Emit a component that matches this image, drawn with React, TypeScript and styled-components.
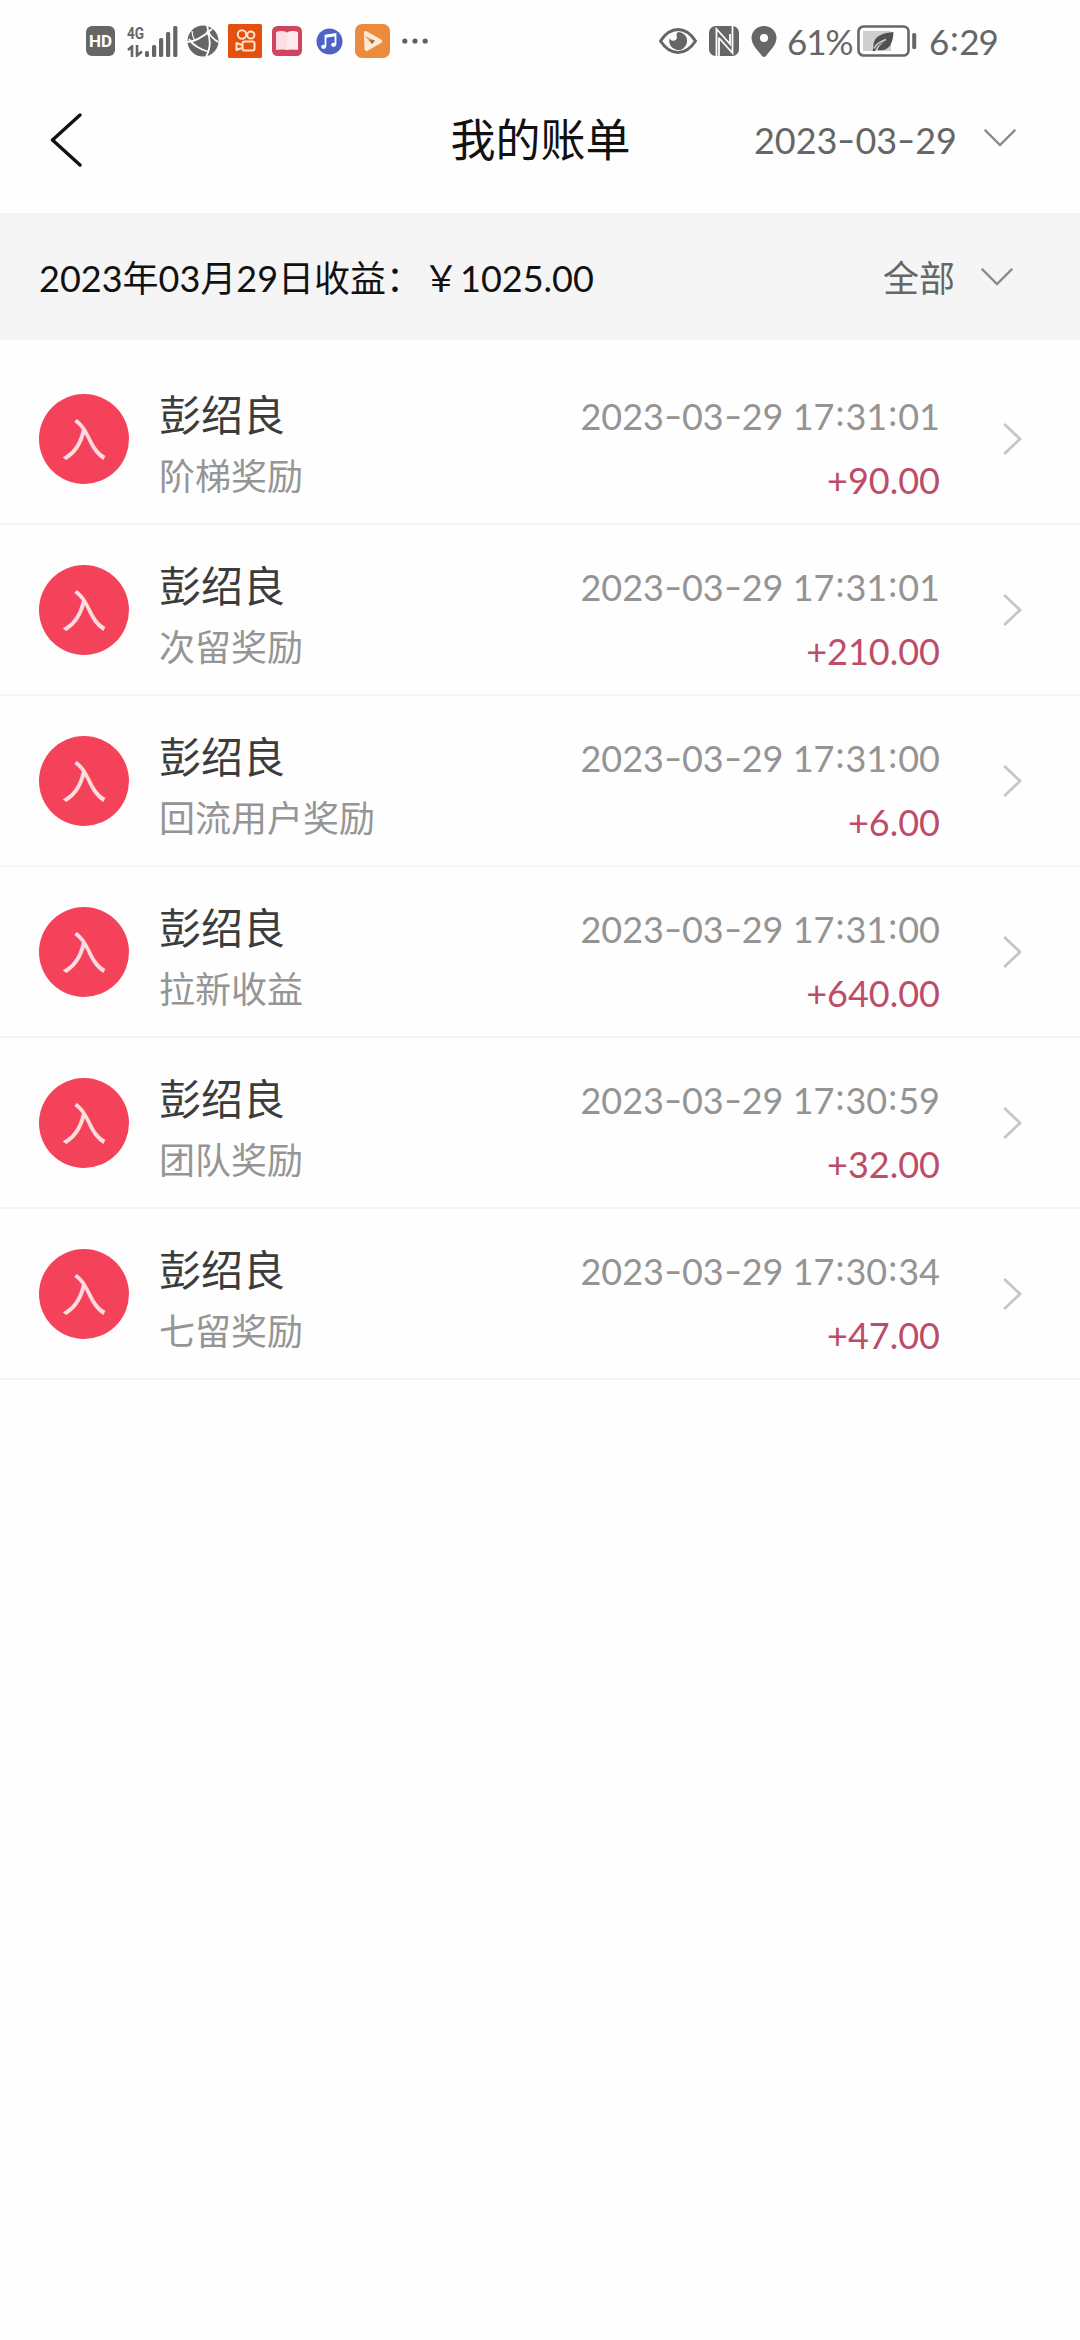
import React from 'react';
import styled, { createGlobalStyle } from 'styled-components';

const GlobalStyle = createGlobalStyle`
  * { box-sizing: border-box; }
  html, body { margin: 0; padding: 0; background: #fefefe; }
  body { font-family: Lato, "Noto Sans CJK SC", sans-serif; font-weight: 400; }
  svg { display: block; flex: none; }
`;

const Screen = styled.div`
  width: 1080px;
  min-height: 2340px;
  background: #fefefe;
  display: flex;
  flex-direction: column;
`;

const StatusBar = styled.header`
  height: 82px;
  display: flex;
  align-items: center;
  justify-content: space-between;
  padding: 0 86px 0 86px;
  color: #666;
`;

const StatusGroup = styled.div`
  display: flex;
  align-items: center;
`;

const Gap = styled.div<{ $left: number }>`
  margin-left: ${(p) => p.$left}px;
  display: flex;
  align-items: center;
`;

const HdBadge = styled.div`
  width: 29px;
  height: 30px;
  border-radius: 6px;
  background: #666;
  color: #fff;
  font: 700 17px/31px Roboto, sans-serif;
  text-align: center;
`;

const NetLabel = styled.div`
  width: 18px;
  height: 31px;
  display: flex;
  flex-direction: column;
  justify-content: space-between;
  font: 700 17px/15px "Roboto", sans-serif;
  span { display: block; transform: scaleX(0.8); transform-origin: left; }
`;

const StatusText = styled.span<{ $width: number }>`
  width: ${(p) => p.$width}px;
  font-size: 35px;
  line-height: 38px;
  letter-spacing: -1px;
  margin-top: -1px;
  white-space: nowrap;
`;

const NavBar = styled.nav`
  height: 131px;
  display: grid;
  grid-template-columns: 1fr auto 1fr;
  align-items: center;
  padding: 0 64px 16px 50px;
`;

const BackButton = styled.button`
  border: 0;
  padding: 0;
  background: none;
  justify-self: start;
`;

const Title = styled.h1`
  margin: 0 0 0 15px;
  font-size: 45px;
  line-height: 60px;
  font-weight: 400;
  color: #111;
`;

const Picker = styled.div<{ $gap: number }>`
  display: flex;
  align-items: center;
  justify-self: end;
  gap: ${(p) => p.$gap}px;
  font-size: 36px;
  line-height: 48px;
  color: #666;
  white-space: nowrap;
  svg { margin-top: -3px; }
`;

const Summary = styled.section`
  height: 127px;
  background: #f5f5f6;
  display: flex;
  align-items: center;
  justify-content: space-between;
  padding: 3px 67px 0 39px;
  font-size: 36px;
  line-height: 48px;
  color: #111;
`;

const Currency = styled.span`
  margin: 0 1px 0 1px;
`;

const List = styled.ul`
  list-style: none;
  margin: 0;
  padding: 14px 0 0;
`;

const Row = styled.li`
  height: 171px;
  border-bottom: 2px solid #f5f5f6;
  display: flex;
  align-items: center;
  padding: 0 58px 0 39px;
`;

const Avatar = styled.div`
  width: 90px;
  height: 90px;
  border-radius: 50%;
  background: #f4425b;
  color: #ffdcdf;
  font-family: "Noto Sans CJK SC", sans-serif;
  font-weight: 400;
  font-size: 46px;
  line-height: 84px;
  text-align: center;
`;

const Column = styled.div<{ $end?: boolean }>`
  display: flex;
  flex-direction: column;
  align-items: ${(p) => (p.$end ? 'flex-end' : 'flex-start')};
  ${(p) => (p.$end ? 'margin: 0 63px 0 auto; padding-top: 18px;' : 'margin-left: 30px; padding-top: 12px;')}
`;

const Name = styled.span`
  font-size: 42px;
  line-height: 62px;
  color: #3c3c3c;
`;

const Kind = styled.span`
  font-size: 36px;
  line-height: 60px;
  color: #959595;
`;

const Time = styled.time`
  font-size: 36px;
  line-height: 64px;
  color: #949494;
  white-space: nowrap;
`;

const Amount = styled.span`
  font-size: 36px;
  line-height: 64px;
  color: #bd4c67;
`;

const Dash = styled.span`
  display: inline-block;
  width: 18px;
  text-align: center;
  transform: translateY(-1px) scaleX(1.4);
`;

const Colon = styled.span`
  display: inline-block;
  width: 11px;
  text-align: center;
  transform: translateY(-4px);
`;

const Stamp = ({ text }: { text: string }) => (
  <>
    {text.split(/([-:])/).map((part, i) => {
      if (part === '-') return <Dash key={i}>-</Dash>;
      if (part === ':') return <Colon key={i}>:</Colon>;
      return <React.Fragment key={i}>{part}</React.Fragment>;
    })}
  </>
);

const ChevronDown = () => (
  <svg width="32" height="18" viewBox="0 0 32 18" fill="none" stroke="#8c8c8c" strokeWidth="2.4">
    <path d="M.8 .8 16 16 31.2 .8" />
  </svg>
);

const ChevronRight = () => (
  <svg width="19" height="32" viewBox="0 0 19 32" fill="none" stroke="#c6c6c6" strokeWidth="2.8">
    <path d="M1.2 1 17 16 1.2 31" />
  </svg>
);

const DataArrows = () => (
  <svg width="18" height="12" viewBox="0 0 18 12" fill="none" stroke="#666" strokeWidth="2.6">
    <path d="M1 5 5 1.5V12M10 0V10.5L15 6.5" />
  </svg>
);

const SignalBars = () => (
  <svg width="33" height="31" viewBox="0 0 33 31" fill="#666">
    <rect x="0" y="25" width="4" height="6" rx="1.5" />
    <rect x="7" y="19" width="4.2" height="12" rx="1.5" />
    <rect x="14" y="12" width="4.2" height="19" rx="1.5" />
    <rect x="21" y="6" width="4.2" height="25" rx="1.5" />
    <rect x="28.2" y="0" width="4.2" height="31" rx="1.5" />
  </svg>
);

const Globe = () => (
  <svg width="32" height="32" viewBox="0 0 32 32">
    <circle cx="16" cy="16" r="15.5" fill="#666" />
    <g fill="none" stroke="#fefefe" strokeWidth="1.8">
      <path d="M20 0C21 7 22 11 31 17" />
      <path d="M0 17C8 17 17 11 25 4" />
      <path d="M2 14C5 19 12 24 22 27" />
      <path d="M20 6C24 14 23 24 19 32" />
      <path d="M5 6Q5 11 8 16" strokeWidth="1.2" />
    </g>
  </svg>
);

const CameraApp = () => (
  <svg width="34" height="34" viewBox="0 0 34 34">
    <rect width="34" height="34" rx="1.5" fill="#e5500f" />
    <g fill="none" stroke="#ffe3cf" strokeWidth="2" strokeLinejoin="round">
      <circle cx="14" cy="10.500" r="4.200" />
      <circle cx="22.800" cy="11" r="3.600" />
      <rect x="14.500" y="17.500" width="12" height="9" rx="2" />
      <path d="M14 21 8.500 19V26L14 24" />
    </g>
  </svg>
);

const BookApp = () => (
  <svg width="30" height="30" viewBox="0 0 30 30">
    <rect width="30" height="30" rx="5.500" fill="#cf4560" />
    <path d="M4 6Q10 4 15 6.500V24Q10 23 4 24Z" fill="#ffdde4" />
    <path d="M15 6.500Q20 4 26 6V24Q20 23 15 24Z" fill="#ffe9ee" />
  </svg>
);

const MusicApp = () => (
  <svg width="27" height="27" viewBox="0 0 27 27">
    <circle cx="13.500" cy="13.500" r="13" fill="#4d63c6" />
    <path d="M9.500 18.500V7.500L19.500 6V16.500" fill="none" stroke="#fff" strokeWidth="1.800" />
    <path d="M9.500 8.500 19.500 7" stroke="#fff" strokeWidth="2.600" />
    <ellipse cx="7.600" cy="18.800" rx="2.500" ry="2.100" fill="#fff" />
    <ellipse cx="17.600" cy="16.800" rx="2.500" ry="2.100" fill="#fff" />
  </svg>
);

const VideoApp = () => (
  <svg width="35" height="34" viewBox="0 0 35 34">
    <rect width="35" height="34" rx="7" fill="#ec8a3e" />
    <path d="M9 9Q9 6 12 7.500L26 15.500Q28.500 17.500 26 19L13 26.500Q10 28 9.500 25Z" fill="#ffe9cf" />
    <path d="M9.500 12 20 16.500 17 19.500Z" fill="#e39a5c" />
    <path d="M14 16 20 16.500 17 20Z" fill="#8f6b4f" />
  </svg>
);

const MoreDots = () => (
  <svg width="26" height="6" viewBox="0 0 26 6" fill="#5f5f5f">
    <circle cx="2.800" cy="3" r="2.600" />
    <circle cx="13" cy="3" r="2.600" />
    <circle cx="23.200" cy="3" r="2.600" />
  </svg>
);

const Eye = () => (
  <svg width="38" height="26" viewBox="0 0 38 26">
    <path d="M1.500 13Q9 1.500 19 1.500T36.500 13Q29 24.500 19 24.500T1.500 13Z" fill="none" stroke="#666" strokeWidth="3" />
    <path d="M19 4A9 9 0 1 1 10.500 10.500Q12.500 13.500 15.500 12.500Q19 11 17.500 7.500Q17 5.500 19 4Z" fill="#666" />
  </svg>
);

const Nfc = () => (
  <svg width="30" height="30" viewBox="0 0 30 30">
    <rect width="30" height="30" rx="6.500" fill="#666" />
    <path d="M7.500 30V3L21 18V8" fill="none" stroke="#fefefe" strokeWidth="1.800" />
    <path d="M10 11.500V30M10 12 23.500 27V0" fill="none" stroke="#fefefe" strokeWidth="1.800" />
  </svg>
);

const Pin = () => (
  <svg width="26" height="31" viewBox="0 0 26 31">
    <path
      fillRule="evenodd"
      fill="#666"
      d="M13 0C20 0 25.500 5.200 25.500 12C25.500 19 18.500 25 15 30Q13 32 11 30C7.500 25 .5 19 .5 12C.5 5.200 6 0 13 0ZM13 8A4 4 0 1 0 13 16A4 4 0 0 0 13 8Z"
    />
  </svg>
);

const Battery = () => (
  <svg width="60" height="32" viewBox="0 0 60 32">
    <rect x="1.500" y="1.500" width="50" height="29" rx="5" fill="none" stroke="#666" strokeWidth="2.600" />
    <rect x="6" y="6" width="28" height="20" fill="#cfcfcf" />
    <rect x="55.200" y="8" width="4" height="16" rx="1.500" fill="#666" />
    <path d="M36.500 7C27 8 16 10 16.500 22L15.500 26H18Q20 20 28 16Q22 20.500 20.500 25C31 27 36 20 36.500 7Z" fill="#505050" />
    <path d="M17 23.500Q20 17.500 29 14.500" fill="none" stroke="#cfcfcf" strokeWidth="1.400" />
  </svg>
);

const bills = [
  { kind: '阶梯奖励', time: '2023-03-29 17:31:01', amount: '+90.00' },
  { kind: '次留奖励', time: '2023-03-29 17:31:01', amount: '+210.00' },
  { kind: '回流用户奖励', time: '2023-03-29 17:31:00', amount: '+6.00' },
  { kind: '拉新收益', time: '2023-03-29 17:31:00', amount: '+640.00' },
  { kind: '团队奖励', time: '2023-03-29 17:30:59', amount: '+32.00' },
  { kind: '七留奖励', time: '2023-03-29 17:30:34', amount: '+47.00' },
];

export default function App() {
  return (
    <Screen>
      <GlobalStyle />
      <StatusBar>
        <StatusGroup>
          <HdBadge>HD</HdBadge>
          <Gap $left={12}>
            <NetLabel>
              <span>4G</span>
              <DataArrows />
            </NetLabel>
            <SignalBars />
          </Gap>
          <Gap $left={9}><Globe /></Gap>
          <Gap $left={9}><CameraApp /></Gap>
          <Gap $left={10}><BookApp /></Gap>
          <Gap $left={14}><MusicApp /></Gap>
          <Gap $left={12}><VideoApp /></Gap>
          <Gap $left={12}><MoreDots /></Gap>
        </StatusGroup>
        <StatusGroup>
          <Eye />
          <Gap $left={12}><Nfc /></Gap>
          <Gap $left={12}><Pin /></Gap>
          <Gap $left={10}><StatusText $width={66}>61%</StatusText></Gap>
          <Gap $left={4}><Battery /></Gap>
          <Gap $left={12}><StatusText $width={65}><Stamp text="6:29" /></StatusText></Gap>
        </StatusGroup>
      </StatusBar>
      <NavBar>
        <BackButton aria-label="返回">
          <svg width="32" height="54" viewBox="0 0 32 54" fill="none" stroke="#111" strokeWidth="3.400" strokeLinecap="round" strokeLinejoin="round">
            <path d="M30 2 2.500 27 30 52" />
          </svg>
        </BackButton>
        <Title>我的账单</Title>
        <Picker $gap={27}>
          <span><Stamp text="2023-03-29" /></span>
          <ChevronDown />
        </Picker>
      </NavBar>
      <Summary>
        <span>2023年03月29日收益：<Currency>￥</Currency>1025.00</span>
        <Picker $gap={26}>
          <span>全部</span>
          <ChevronDown />
        </Picker>
      </Summary>
      <List>
        {bills.map((bill) => (
          <Row key={bill.kind}>
            <Avatar>入</Avatar>
            <Column>
              <Name>彭绍良</Name>
              <Kind>{bill.kind}</Kind>
            </Column>
            <Column $end>
              <Time><Stamp text={bill.time} /></Time>
              <Amount>{bill.amount}</Amount>
            </Column>
            <ChevronRight />
          </Row>
        ))}
      </List>
    </Screen>
  );
}
